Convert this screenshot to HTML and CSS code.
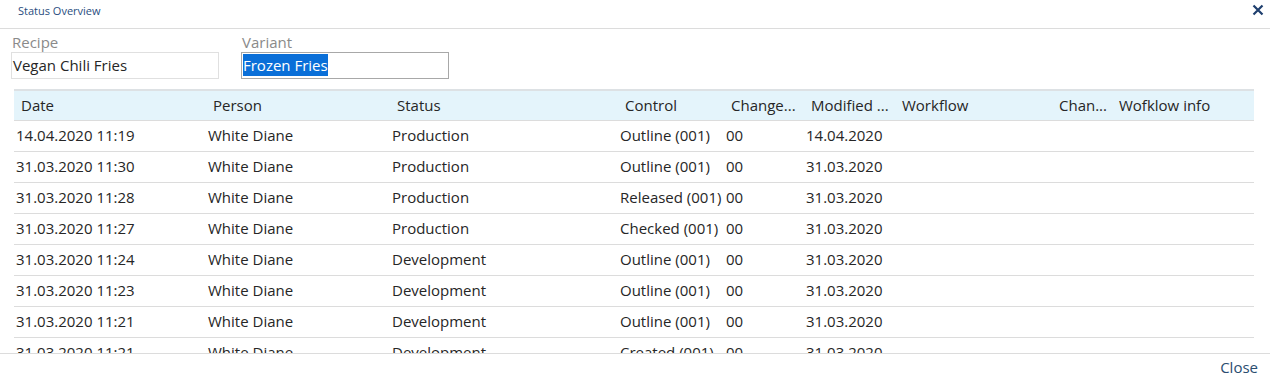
FILE: index.html
```html
<!DOCTYPE html>
<html lang="en">
<head>
  <meta charset="UTF-8">
  <title>Status Overview</title>
  <link rel="stylesheet" href="styles.css">
</head>
<body>
  <div class="dialog">
    <div class="dialog-header">
      <span class="dialog-title">Status Overview</span>
      <button class="close-x" title="Close">
        <svg width="12" height="12" viewBox="0 0 12 12"><path d="M1.5 1.5 L10.5 10.5 M10.5 1.5 L1.5 10.5" stroke="#1f3f6e" stroke-width="2.2"/></svg>
      </button>
    </div>

    <div class="fields">
      <div class="field">
        <label>Recipe</label>
        <div class="input">Vegan Chili Fries</div>
      </div>
      <div class="field">
        <label>Variant</label>
        <div class="input focused"><span class="selected">Frozen Fries</span></div>
      </div>
    </div>

    <div class="grid-wrap">
      <table class="grid">
        <colgroup>
          <col style="width:192px"><col style="width:184px"><col style="width:228px"><col style="width:106px"><col style="width:80px"><col style="width:91px"><col style="width:157px"><col style="width:60px"><col style="width:142px">
        </colgroup>
        <thead>
          <tr>
            <th>Date</th><th>Person</th><th>Status</th><th>Control</th><th>Change...</th><th>Modified ...</th><th>Workflow</th><th>Chan...</th><th>Wofklow info</th>
          </tr>
        </thead>
        <tbody>
          <tr><td>14.04.2020 11:19</td><td>White Diane</td><td>Production</td><td>Outline (001)</td><td>00</td><td>14.04.2020</td><td></td><td></td><td></td></tr>
          <tr><td>31.03.2020 11:30</td><td>White Diane</td><td>Production</td><td>Outline (001)</td><td>00</td><td>31.03.2020</td><td></td><td></td><td></td></tr>
          <tr><td>31.03.2020 11:28</td><td>White Diane</td><td>Production</td><td>Released (001)</td><td>00</td><td>31.03.2020</td><td></td><td></td><td></td></tr>
          <tr><td>31.03.2020 11:27</td><td>White Diane</td><td>Production</td><td>Checked (001)</td><td>00</td><td>31.03.2020</td><td></td><td></td><td></td></tr>
          <tr><td>31.03.2020 11:24</td><td>White Diane</td><td>Development</td><td>Outline (001)</td><td>00</td><td>31.03.2020</td><td></td><td></td><td></td></tr>
          <tr><td>31.03.2020 11:23</td><td>White Diane</td><td>Development</td><td>Outline (001)</td><td>00</td><td>31.03.2020</td><td></td><td></td><td></td></tr>
          <tr><td>31.03.2020 11:21</td><td>White Diane</td><td>Development</td><td>Outline (001)</td><td>00</td><td>31.03.2020</td><td></td><td></td><td></td></tr>
          <tr><td>31.03.2020 11:21</td><td>White Diane</td><td>Development</td><td>Created (001)</td><td>00</td><td>31.03.2020</td><td></td><td></td><td></td></tr>
        </tbody>
      </table>
    </div>

    <div class="dialog-footer">
      <button class="link-btn">Close</button>
    </div>
  </div>
</body>
</html>
```

FILE: styles.css
```css
body {
  margin: 0;
  font-family: 'Open Sans', sans-serif;
  background: #fff;
  color: #262626;
}

.dialog {
  width: 1270px;
  height: 382px;
  display: flex;
  flex-direction: column;
}

.dialog-header {
  height: 28px;
  border-bottom: 1px solid #dcdcdc;
  display: flex;
  align-items: center;
  justify-content: space-between;
  padding: 0 6px 0 18px;
  box-sizing: content-box;
}

.dialog-title {
  font-size: 11px;
  color: #2a4d80;
  margin-top: -8px;
}

.close-x {
  border: none;
  background: none;
  padding: 0;
  margin-top: -6px;
  cursor: pointer;
}

.fields {
  display: flex;
  gap: 22px;
  padding: 3px 0 0 11px;
}

.field label {
  display: block;
  font-size: 15px;
  color: #8a8a8a;
  line-height: 20px;
  padding-left: 1px;
}

.input {
  width: 205px;
  height: 25px;
  border: 1px solid #e0e0e0;
  font-size: 15px;
  line-height: 25px;
  padding-left: 1px;
  color: #262626;
}

.input.focused {
  border-color: #a8a8a8;
}

.selected {
  background: #0a6fd8;
  color: #fff;
  display: inline-block;
  line-height: 22px;
}

.grid-wrap {
  margin: 10px 0 0 14px;
  width: 1240px;
  height: 262px;
  overflow: hidden;
  border-top: 2px solid #dde1e4;
}

.grid {
  border-collapse: collapse;
  table-layout: fixed;
  width: 1240px;
  font-size: 15px;
}

.grid th {
  background: #e4f4fb;
  font-weight: normal;
  text-align: left;
  height: 28px;
  padding: 0 0 1px 7px;
  color: #262626;
  border-bottom: 1px solid #dcdcdc;
  white-space: nowrap;
  overflow: hidden;
}

.grid td {
  height: 27px;
  padding: 0 0 3px 2px;
  border-bottom: 1px solid #dcdcdc;
  white-space: nowrap;
  overflow: hidden;
}

.dialog-footer {
  border-top: 1px solid #dcdcdc;
  flex: 1;
  display: flex;
  justify-content: flex-end;
  align-items: center;
  padding-right: 12px;
}

.link-btn {
  border: none;
  background: none;
  font-family: inherit;
  font-size: 15px;
  color: #2a4d70;
  padding: 0 0 3px;
  cursor: pointer;
}
```
